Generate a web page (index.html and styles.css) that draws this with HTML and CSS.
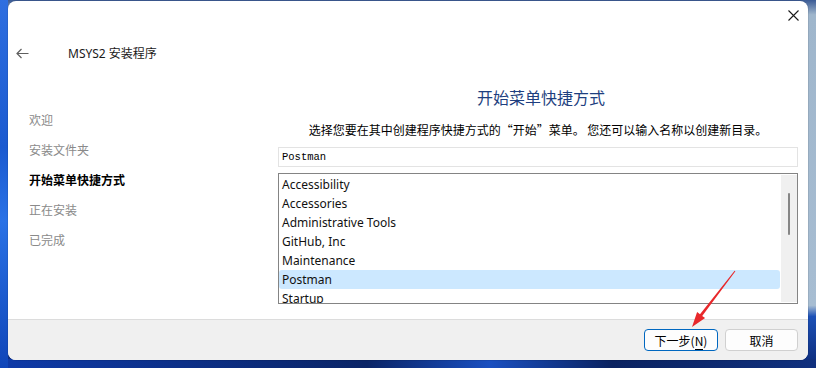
FILE: index.html
```html
<!DOCTYPE html>
<html lang="zh-CN">
<head>
  <meta charset="UTF-8" />
  <title>MSYS2 安装程序</title>
  <link rel="stylesheet" href="styles.css">
</head>
<body>
  <div class="window">
    <!-- Заголовок окна -->
    <div class="titlebar">
      <div class="close-btn">
        <svg width="11" height="11" viewBox="0 0 11 11"><path d="M0.5 0.5 L10.5 10.5 M10.5 0.5 L0.5 10.5" stroke="#1a1a1a" stroke-width="1.1" fill="none"/></svg>
      </div>
    </div>
    <div class="header">
      <svg class="back" width="13" height="11" viewBox="0 0 13 11"><path d="M12.5 5.5 H1 M5.5 1 L1 5.5 L5.5 10" stroke="#5f5f5f" stroke-width="1.2" fill="none"/></svg>
      <span class="app-title">MSYS2 安装程序</span>
    </div>

    <div class="main">
      <ul class="steps">
        <li>欢迎</li>
        <li>安装文件夹</li>
        <li class="active">开始菜单快捷方式</li>
        <li>正在安装</li>
        <li>已完成</li>
      </ul>

      <div class="content">
        <h1 class="page-title">开始菜单快捷方式</h1>
        <p class="page-desc">选择您要在其中创建程序快捷方式的“开始”菜单。 您还可以输入名称以创建新目录。</p>
        <input class="folder-input" type="text" value="Postman" />
        <div class="folder-list">
          <ul class="items">
            <li>Accessibility</li>
            <li>Accessories</li>
            <li>Administrative Tools</li>
            <li>GitHub, Inc</li>
            <li>Maintenance</li>
            <li class="selected">Postman</li>
            <li>Startup</li>
          </ul>
          <div class="scrollbar"><div class="thumb"></div></div>
        </div>
      </div>
    </div>

    <div class="footer">
      <button class="btn primary">下一步(<u>N</u>)</button>
      <button class="btn">取消</button>
    </div>
  </div>

  <!-- Красная стрелка поверх окна -->
  <svg class="pointer" width="816" height="368" viewBox="0 0 816 368">
    <polygon fill="#e8282b" points="735.4,271.3 702.2,316.0 705.1,318.1 692,327 697.1,312.1 700.0,314.2 734.6,270.7"/>
  </svg>
</body>
</html>
```

FILE: styles.css
```css
* {
  box-sizing: border-box;
}

body {
  margin: 0;
  width: 816px;
  height: 368px;
  overflow: hidden;
  position: relative;
  font-family: "Noto Sans", "Noto Sans CJK SC", sans-serif;
  font-size: 12px;
  color: #000;
  background:
    linear-gradient(180deg, #2f6fe0 0, #1b5ad0 40%, #2a72e6 60%, #0f45b8 100%) left top / 8px 100% no-repeat,
    linear-gradient(90deg, #0e3aa8 0, #0a2466 45%, #1a4fc0 60%, #0a2260 75%, #10307e 100%) left bottom / 100% 9px no-repeat,
    linear-gradient(180deg, #3a5a95 0, #9fb6cc 4%, #a7bdd2 83%, #1c50b6 86%, #0c2a78 100%);
}

.window {
  margin: 1px 8px 0;
  height: 359px;
  background: #fff;
  border-radius: 8px;
  overflow: hidden;
  display: flex;
  flex-direction: column;
  box-shadow: 0 0 0 1px rgba(0, 0, 0, 0.08);
}

.titlebar {
  height: 28px;
  display: flex;
  justify-content: flex-end;
}

.close-btn {
  width: 30px;
  display: flex;
  align-items: center;
  justify-content: center;
}

.header {
  height: 48px;
  display: flex;
  align-items: center;
}

.header .back {
  margin-left: 8px;
}

.app-title {
  margin-left: 39px;
  font-size: 12px;
  color: #1a1a1a;
}

.main {
  flex: 1;
  display: flex;
}

.steps {
  width: 270px;
  margin: 0;
  padding: 29px 0 0 21px;
  list-style: none;
}

.steps li {
  height: 30px;
  line-height: 30px;
  color: #8a8a8a;
}

.steps li.active {
  color: #000;
  font-weight: bold;
}

.content {
  flex: 1;
  padding: 9px 10px 0 0;
  display: flex;
  flex-direction: column;
}

.page-title {
  margin: 0;
  text-align: center;
  font-family: "Noto Sans CJK SC", sans-serif;
  font-size: 16px;
  font-weight: normal;
  line-height: 22px;
  color: #1e3f80;
  padding-left: 6px;
}

.page-desc {
  margin: 13px 0 0;
  text-align: center;
  line-height: 18px;
  font-family: "Noto Sans CJK SC", sans-serif;
  font-size: 12px;
  color: #000;
}

.folder-input {
  margin-top: 8px;
  height: 20px;
  padding: 0 3px;
  border: 1px solid #e3e3e3;
  font-family: "Liberation Mono", monospace;
  font-size: 10.5px;
  color: #000;
  outline: none;
}

.folder-list {
  margin-top: 6px;
  height: 131px;
  border: 1px solid #848484;
  display: flex;
  overflow: hidden;
}

.items {
  flex: 1;
  margin: 0;
  padding: 1px 0 0;
  list-style: none;
}

.items li {
  height: 19px;
  line-height: 19px;
  padding-left: 3px;
  font-size: 12px;
  color: #111;
  border-radius: 3px;
}

.items li.selected {
  background: #cce8ff;
}

.scrollbar {
  width: 16px;
  margin: 1px 0 1px 1px;
  background: #f0f0f0;
  position: relative;
}

.thumb {
  position: absolute;
  left: 7px;
  top: 18px;
  width: 2px;
  height: 42px;
  border-radius: 1px;
  background: #868686;
}

.footer {
  height: 41px;
  background: #f0f0f0;
  border-top: 1px solid #dcdcdc;
  display: flex;
  justify-content: flex-end;
  align-items: center;
  gap: 7px;
  padding-right: 10px;
}

.btn {
  width: 73px;
  height: 22px;
  padding: 0;
  font-family: "Noto Sans CJK SC", sans-serif;
  font-size: 12px;
  color: #000;
  background: #fdfdfd;
  border: 1px solid #d0d0d0;
  border-radius: 4px;
}

.btn.primary {
  width: 74px;
  border-color: #0067c0;
}

.btn u {
  text-decoration: none;
  border-bottom: 1px solid #000;
}

.pointer {
  position: absolute;
  left: 0;
  top: 0;
}
```
